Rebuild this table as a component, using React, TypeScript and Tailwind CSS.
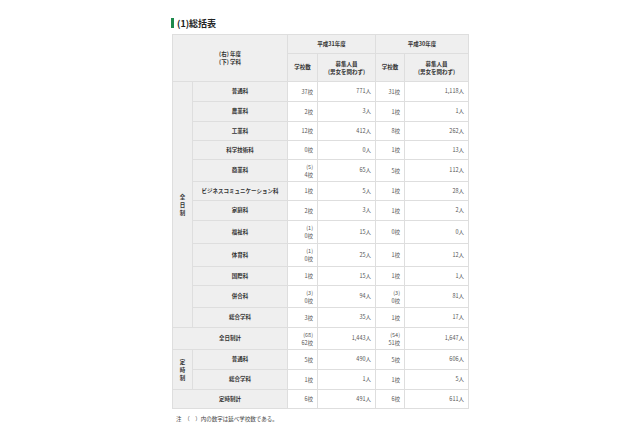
type Row = {
  label: string;
  s31: string[];
  n31: string;
  s30: string[];
  n30: string;
  h: string;
};

const fullTime: Row[] = [
  { label: "普通科", s31: ["37校"], n31: "771人", s30: ["31校"], n30: "1,118人", h: "h-[20px]" },
  { label: "農業科", s31: ["2校"], n31: "3人", s30: ["1校"], n30: "1人", h: "h-[20px]" },
  { label: "工業科", s31: ["12校"], n31: "412人", s30: ["8校"], n30: "262人", h: "h-[19px]" },
  { label: "科学技術科", s31: ["0校"], n31: "0人", s30: ["1校"], n30: "13人", h: "h-[19px]" },
  { label: "商業科", s31: ["(5)", "4校"], n31: "65人", s30: ["5校"], n30: "112人", h: "h-[22px]" },
  { label: "ビジネスコミュニケーション科", s31: ["1校"], n31: "5人", s30: ["1校"], n30: "28人", h: "h-[19px]" },
  { label: "家庭科", s31: ["2校"], n31: "3人", s30: ["1校"], n30: "2人", h: "h-[20px]" },
  { label: "福祉科", s31: ["(1)", "0校"], n31: "15人", s30: ["0校"], n30: "0人", h: "h-[23px]" },
  { label: "体育科", s31: ["(1)", "0校"], n31: "25人", s30: ["1校"], n30: "12人", h: "h-[23px]" },
  { label: "国際科", s31: ["1校"], n31: "15人", s30: ["1校"], n30: "1人", h: "h-[19px]" },
  { label: "併合科", s31: ["(3)", "0校"], n31: "94人", s30: ["(3)", "0校"], n30: "81人", h: "h-[22px]" },
  { label: "総合学科", s31: ["3校"], n31: "35人", s30: ["1校"], n30: "17人", h: "h-[20px]" },
];

const partTime: Row[] = [
  { label: "普通科", s31: ["5校"], n31: "490人", s30: ["5校"], n30: "606人", h: "h-[20px]" },
  { label: "総合学科", s31: ["1校"], n31: "1人", s30: ["1校"], n30: "5人", h: "h-[20px]" },
];

const th = "border border-[#dedede] bg-[#efefef] font-bold text-[#333] text-center align-middle p-0";
const td = "border border-[#dedede] bg-white text-[#555] text-right align-middle p-0 pr-[4px]";

function Lines({ items }: { items: string[] }) {
  return (
    <div className="flex flex-col items-end leading-[8px]">
      {items.map((t) => (
        <span key={t}>{t}</span>
      ))}
    </div>
  );
}

function DataCells({ r }: { r: Row }) {
  return (
    <>
      <td className={td}>
        <Lines items={r.s31} />
      </td>
      <td className={td}>{r.n31}</td>
      <td className={td}>
        <Lines items={r.s30} />
      </td>
      <td className={td}>{r.n30}</td>
    </>
  );
}

function Vertical({ text }: { text: string }) {
  return (
    <div className="flex flex-col items-center leading-[8px]">
      {text.split("").map((c, i) => (
        <span key={i}>{c}</span>
      ))}
    </div>
  );
}

export default function App() {
  return (
    <div
      className="min-h-screen w-full bg-white"
      style={{ fontFamily: '"Noto Sans CJK JP", "Noto Sans", sans-serif' }}
    >
      <div className="mx-auto w-[296px] pt-[18px]">
        <div className="flex items-center gap-[3px] h-[10px] -ml-[1px]">
          <div className="w-[3px] h-[10px] bg-[#1e8a4c]" />
          <span className="text-[9px] font-bold text-[#222] leading-none">(1)総括表</span>
        </div>

        <table className="mt-[6px] w-[296px] table-fixed border-collapse text-[5.5px] leading-[7px]">
          <colgroup>
            <col className="w-[20px]" />
            <col className="w-[95px]" />
            <col className="w-[30px]" />
            <col className="w-[58px]" />
            <col className="w-[29px]" />
            <col className="w-[64px]" />
          </colgroup>
          <tbody>
            <tr className="h-[19px]">
              <th className={th} colSpan={2} rowSpan={2}>
                <div className="flex flex-col items-center leading-[8px]">
                  <span>(右) 年度</span>
                  <span>(下) 学科</span>
                </div>
              </th>
              <th className={th} colSpan={2}>平成31年度</th>
              <th className={th} colSpan={2}>平成30年度</th>
            </tr>
            <tr className="h-[28px]">
              <th className={th}>学校数</th>
              <th className={th}>
                <div className="flex flex-col items-center leading-[8px]">
                  <span>募集人員</span>
                  <span>(男女を問わず)</span>
                </div>
              </th>
              <th className={th}>学校数</th>
              <th className={th}>
                <div className="flex flex-col items-center leading-[8px]">
                  <span>募集人員</span>
                  <span>(男女を問わず)</span>
                </div>
              </th>
            </tr>
            {fullTime.map((r, i) => (
              <tr key={r.label} className={r.h}>
                {i === 0 && (
                  <th className={th} rowSpan={fullTime.length}>
                    <Vertical text="全日制" />
                  </th>
                )}
                <th className={th}>{r.label}</th>
                <DataCells r={r} />
              </tr>
            ))}
            <tr className="h-[22px]">
              <th className={th} colSpan={2}>全日制計</th>
              <td className={td}>
                <Lines items={["(68)", "62校"]} />
              </td>
              <td className={td}>1,443人</td>
              <td className={td}>
                <Lines items={["(54)", "51校"]} />
              </td>
              <td className={td}>1,647人</td>
            </tr>
            {partTime.map((r, i) => (
              <tr key={"p" + r.label} className={r.h}>
                {i === 0 && (
                  <th className={th} rowSpan={partTime.length}>
                    <Vertical text="定時制" />
                  </th>
                )}
                <th className={th}>{r.label}</th>
                <DataCells r={r} />
              </tr>
            ))}
            <tr className="h-[19px]">
              <th className={th} colSpan={2}>定時制計</th>
              <td className={td}>6校</td>
              <td className={td}>491人</td>
              <td className={td}>6校</td>
              <td className={td}>611人</td>
            </tr>
          </tbody>
        </table>

        <p className="mt-[8px] pl-[4px] text-[5.5px] text-[#444] leading-none">
          注　（　）内の数字は延べ学校数である。
        </p>
      </div>
    </div>
  );
}
